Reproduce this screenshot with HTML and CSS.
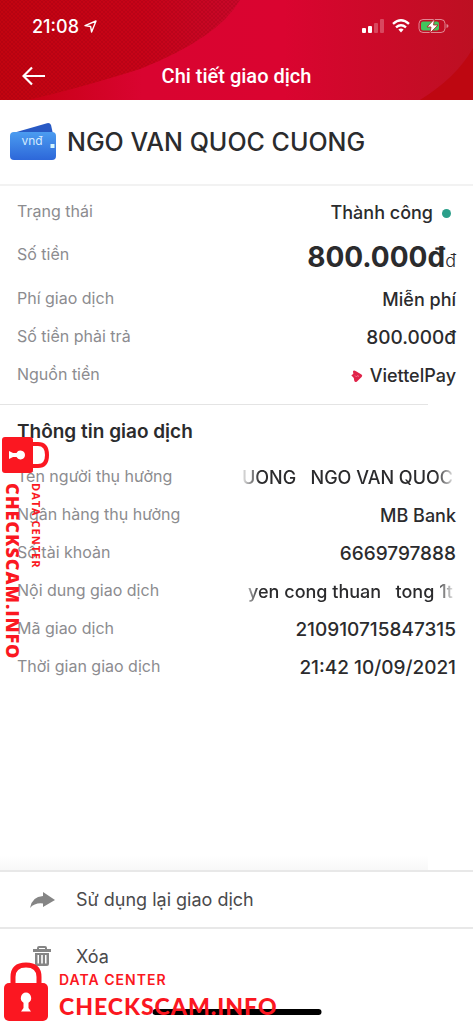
FILE: index.html
```html
<!DOCTYPE html>
<html lang="vi">
<head>
<meta charset="utf-8">
<meta name="viewport" content="width=device-width, initial-scale=1">
<title>Chi tiết giao dịch</title>
<link rel="stylesheet" href="styles.css">
</head>
<body>
<div class="screen">
  <header class="header">
    <svg class="header-art" viewBox="0 0 473 100" preserveAspectRatio="none" aria-hidden="true">
      <defs>
        <linearGradient id="art-base" x1="0" x2="1"><stop offset="0" stop-color="#c4000f"/><stop offset=".3" stop-color="#d90430"/><stop offset=".6" stop-color="#da0430"/><stop offset="1" stop-color="#bd1022"/></linearGradient>
        <linearGradient id="art-left" x1="0" x2="1"><stop offset="0" stop-color="#c20410"/><stop offset=".6" stop-color="#c70318"/><stop offset="1" stop-color="#c8082a"/></linearGradient>
        <pattern id="art-dots" width="4" height="4" patternUnits="userSpaceOnUse"><path d="M0 0L2 2L4 0M0 4L2 2L4 4" fill="none" stroke="#8f0010" stroke-opacity=".22" stroke-width="1"/></pattern>
      </defs>
      <path fill="url(#art-base)" d="M0 0H473V100H0Z"/>
      <path fill="url(#art-left)" d="M0 0H240Q218 38 140 69Q80 88 28 100H0Z"/>
      <path fill="url(#art-dots)" d="M0 0H240Q218 38 140 69Q80 88 28 100H0Z"/>
      <path fill="#be0711" d="M473 48Q457 77 420 100H473Z"/>
    </svg>
    <div class="status-bar">
      <div class="clock">
        <span>21:08</span>
        <svg width="13" height="13" viewBox="0 0 13 13" aria-hidden="true"><path d="M1 5.6L12 1L7.6 12L6.6 6.5Z" fill="none" stroke="#fff" stroke-width="1.4" stroke-linejoin="round"/></svg>
      </div>
      <div class="indicators">
        <svg width="22" height="14" viewBox="0 0 22 14" aria-hidden="true"><g fill="#fff"><rect y="9" width="4" height="5" rx="1"/><rect x="6" y="7" width="4" height="7" rx="1"/><g opacity=".25"><rect x="12" y="4" width="4" height="10" rx="1"/><rect x="18" width="4" height="14" rx="1"/></g></g></svg>
        <svg width="18" height="14" viewBox="0 0 18 14" aria-hidden="true"><g fill="none" stroke="#fff" stroke-width="2.4"><path d="M1 4.8Q9-2.2 17 4.8"/><path d="M4 8.3Q9 4.1 14 8.3"/></g><path d="M6.4 10.6Q9 8.6 11.6 10.6L9 13.4Z" fill="#fff"/></svg>
        <svg width="31" height="16" viewBox="0 0 31 16" aria-hidden="true"><rect x="1" y="1.5" width="26" height="13" rx="4" fill="none" stroke="#fff" stroke-opacity=".5"/><rect x="3" y="3.5" width="18" height="9" rx="2" fill="#43c65d"/><path d="M28.5 6V10Q30.500 9.500 30.500 8T28.500 6" fill="#fff" opacity=".5"/><path d="M16.500 1L9 9H13L12 15L20 7H15.500Z" fill="#fff" stroke="#b51a2a" stroke-width=".8"/></svg>
      </div>
    </div>
    <div class="nav">
      <button class="back" type="button" aria-label="Quay lại"><svg width="24" height="20" viewBox="0 0 24 20" aria-hidden="true"><path d="M23 10H1.500M10 1.500L1.500 10L10 18.500" fill="none" stroke="#fff" stroke-width="2.200"/></svg></button>
      <h1 class="title">Chi tiết giao dịch</h1>
    </div>
  </header>

  <main class="content">
    <section class="recipient">
      <svg width="48" height="40" viewBox="0 0 48 40" aria-hidden="true">
        <defs><linearGradient id="wallet" x2="0" y2="1"><stop stop-color="#4b9cf0"/><stop offset="1" stop-color="#2d67d9"/></linearGradient></defs>
        <path d="M3 11L37 1.200Q40 .5 41 3L43 12H3Z" fill="#2859c4"/>
        <rect x="0" y="10" width="46" height="28" rx="4" fill="url(#wallet)"/>
        <rect x="40.500" y="22" width="4" height="4" fill="#d5f6ff"/>
        <text class="wallet-text" x="22" y="23" text-anchor="middle">vnđ</text>
      </svg>
      <h2 class="name">NGO VAN QUOC CUONG</h2>
    </section>

    <dl class="rows summary">
      <div class="row"><dt>Trạng thái</dt><dd>Thành công <span class="dot"></span></dd></div>
      <div class="row row-amount"><dt>Số tiền</dt><dd><span><strong class="amount">800.000đ</strong><span class="unit">đ</span></span></dd></div>
      <div class="row"><dt>Phí giao dịch</dt><dd>Miễn phí</dd></div>
      <div class="row"><dt>Số tiền phải trả</dt><dd class="number">800.000đ</dd></div>
      <div class="row"><dt>Nguồn tiền</dt><dd class="source"><svg width="12" height="13" viewBox="0 0 12 13" aria-hidden="true"><path d="M2 1Q3 0 5 1.200L10.500 4.500Q12 5.500 10.600 7L6 11.500Q4 13 3.200 10.500L2.800 8L.3 5.200L2.300 4Z" fill="#e02349"/><path d="M4 5.500L5.500 7L6.500 5.500L8 6.500" fill="none" stroke="#f2708f"/></svg>ViettelPay</dd></div>
    </dl>
    <hr class="divider">

    <h3 class="section-title">Thông tin giao dịch</h3>
    <dl class="rows">
      <div class="row"><dt>Tên người thụ hưởng</dt><dd class="ticker"><span>UONG &nbsp; NGO VAN QUOC</span></dd></div>
      <div class="row"><dt>Ngân hàng thụ hưởng</dt><dd>MB Bank</dd></div>
      <div class="row"><dt>Số tài khoản</dt><dd class="number">6669797888</dd></div>
      <div class="row"><dt>Nội dung giao dịch</dt><dd class="ticker"><span>yen cong thuan &nbsp; tong 1t</span></dd></div>
      <div class="row"><dt>Mã giao dịch</dt><dd class="number">210910715847315</dd></div>
      <div class="row"><dt>Thời gian giao dịch</dt><dd class="number">21:42 10/09/2021</dd></div>
    </dl>
  </main>

  <div class="shade"></div>
  <footer class="actions">
    <button class="action" type="button">
      <svg width="26" height="24" viewBox="0 0 26 24" aria-hidden="true"><path d="M14 4L26 12L14 19V15.500Q6 14.500 1 20Q3 8.500 14 8Z" fill="#858585"/></svg>
      <span>Sử dụng lại giao dịch</span>
    </button>
    <button class="action" type="button">
      <svg width="26" height="24" viewBox="0 0 26 24" aria-hidden="true"><path fill="#858585" fill-rule="evenodd" d="M4 4H8V3Q8 1 10 1H16Q18 1 18 3V4H22V7H4ZM10 3V4H16V3ZM6 8H20V19Q20 21 18 21H8Q6 21 6 19ZM8.500 10V18.500H10V10ZM12.200 10V18.500H13.800V10ZM16 10V18.500H17.500V10Z"/></svg>
      <span>Xóa</span>
    </button>
  </footer>
  <div class="home-bar"></div>

  <div class="mark mark-bottom">
    <svg width="44" height="60" viewBox="0 0 44 60" aria-hidden="true"><path d="M9 24V15Q9 3 22 3T35 15V24" fill="none" stroke="#fb1721" stroke-width="5"/><rect y="21" width="44" height="38" rx="5" fill="#fb1721"/><path d="M22 30.500A5.500 5.500 0 0 1 24.500 40.700V46L27 49.500H17L19.500 46V40.700A5.500 5.500 0 0 1 22 30.500Z" fill="#fff"/></svg>
    <div class="mark-text"><span class="mark-small">DATA CENTER</span><span class="mark-big">CHECKSCAM.INFO</span></div>
  </div>
  <div class="mark mark-side">
    <svg width="48" height="36" viewBox="0 0 48 36" aria-hidden="true"><path d="M29 7H36Q45 7 45 18T36 29H29" fill="none" stroke="#fb1721" stroke-width="4"/><rect width="31" height="36" rx="3" fill="#fb1721"/><path d="M23 18A4.500 4.500 0 0 1 14.500 20H11L7 22V14L11 16H14.500A4.500 4.500 0 0 1 23 18Z" fill="#fff"/></svg>
    <div class="mark-text"><span class="mark-small">DATA CENTER</span><span class="mark-big">CHECKSCAM.INFO</span></div>
  </div>
</div>
</body>
</html>
```
FILE: styles.css
```css
* { box-sizing: border-box; }
body { margin: 0; background: #fff; color: #2b2b2d; font-family: Inter, "Noto Sans", sans-serif; }
h1, h2, h3, dl, dd { margin: 0; }
button { border: 0; background: none; padding: 0; font: inherit; color: inherit; }
svg { display: block; flex: none; }

.screen { position: relative; display: flex; flex-direction: column; min-height: 100vh; overflow: hidden; }

.header { position: relative; color: #fff; padding-bottom: 8px; }
.header-art { position: absolute; inset: 0; width: 100%; height: 100%; }
.status-bar { position: relative; display: flex; justify-content: space-between; align-items: center; height: 52px; padding: 0 24px 0 32px; }
.clock { display: flex; align-items: center; gap: 5px; font-size: 18px; font-weight: 500; }
.indicators { display: flex; align-items: center; gap: 8px; }
.nav { position: relative; display: grid; grid-template-columns: 24px 1fr 24px; align-items: center; height: 40px; padding: 8px 22px 0; }
.title { font: 500 20px/32px Roboto, sans-serif; text-align: center; }

.content { flex: 1; }
.recipient { display: flex; align-items: center; gap: 9px; height: 86px; padding-left: 10px; border-bottom: 2px solid #f2f2f2; }
.wallet-text { font-size: 12px; fill: #d5ebff; }
.name { font-size: 25px; font-weight: 450; line-height: 32px; }

.rows { padding: 0 17px; }
.summary { padding-top: 8px; padding-bottom: 9px; }
.row { display: flex; justify-content: space-between; align-items: center; height: 38px; }
.row-amount { height: 49px; }
dt { padding-bottom: 5px; font-size: 16px; line-height: 24px; font-weight: 400; color: #8c8c8f; }
dd { display: flex; align-items: center; font-size: 18px; line-height: 24px; font-weight: 450; white-space: nowrap; }
.number { font-size: 19px; }
.dot { width: 9px; height: 9px; margin: 0 5px 0 9px; border-radius: 50%; background: #2b9f8a; }
.amount { font-size: 28px; font-weight: 700; line-height: 36px; }
.unit { font-size: 18px; font-weight: 300; }
.source { gap: 7px; }
.ticker { width: 216px; justify-content: flex-end; padding-right: 3px; -webkit-mask-image: linear-gradient(90deg, transparent, #000 20px, #000 196px, transparent); mask-image: linear-gradient(90deg, transparent, #000 20px, #000 196px, transparent); }
.divider { height: 1px; margin: 0 45px 0 0; border: 0; background: #e4e4e4; }
.section-title { padding: 15px 17px; font-size: 19px; font-weight: 600; line-height: 24px; }

.shade { height: 14px; margin-right: 45px; background: linear-gradient(#fff, #f8f8f8); }
.actions { padding-bottom: 40px; }
.action { display: flex; align-items: center; gap: 21px; width: 100%; height: 57px; padding-left: 29px; border-top: 2px solid #e8e8e8; font-size: 18px; font-weight: 400; color: #4a4a4c; text-align: left; }
.home-bar { position: absolute; left: 50%; bottom: 9px; width: 169px; height: 6px; border-radius: 3px; background: #000; transform: translateX(-50%); }

.mark { position: absolute; display: flex; color: #fb1721; font-family: Lato, sans-serif; font-weight: 900; white-space: nowrap; }
.mark-text { display: flex; flex-direction: column; }
.mark-bottom { left: 4px; bottom: 2px; gap: 11px; }
.mark-bottom .mark-small { padding-top: 8px; font: 600 14px/20px Inter, sans-serif; letter-spacing: 1px; }
.mark-bottom .mark-big { font-size: 23px; line-height: 32px; letter-spacing: 1px; }
.mark-side { left: 2px; top: 437px; flex-direction: column; align-items: flex-start; gap: 10px; }
.mark-side .mark-text { display: block; writing-mode: vertical-rl; }
.mark-side .mark-small, .mark-side .mark-big { display: block; font-family: "Open Sans", sans-serif; }
.mark-side .mark-small { margin-left: 4px; font-size: 11px; line-height: 16px; font-weight: 700; letter-spacing: 1px; }
.mark-side .mark-big { font-size: 18px; line-height: 22px; font-weight: 800; letter-spacing: 1px; }
```
